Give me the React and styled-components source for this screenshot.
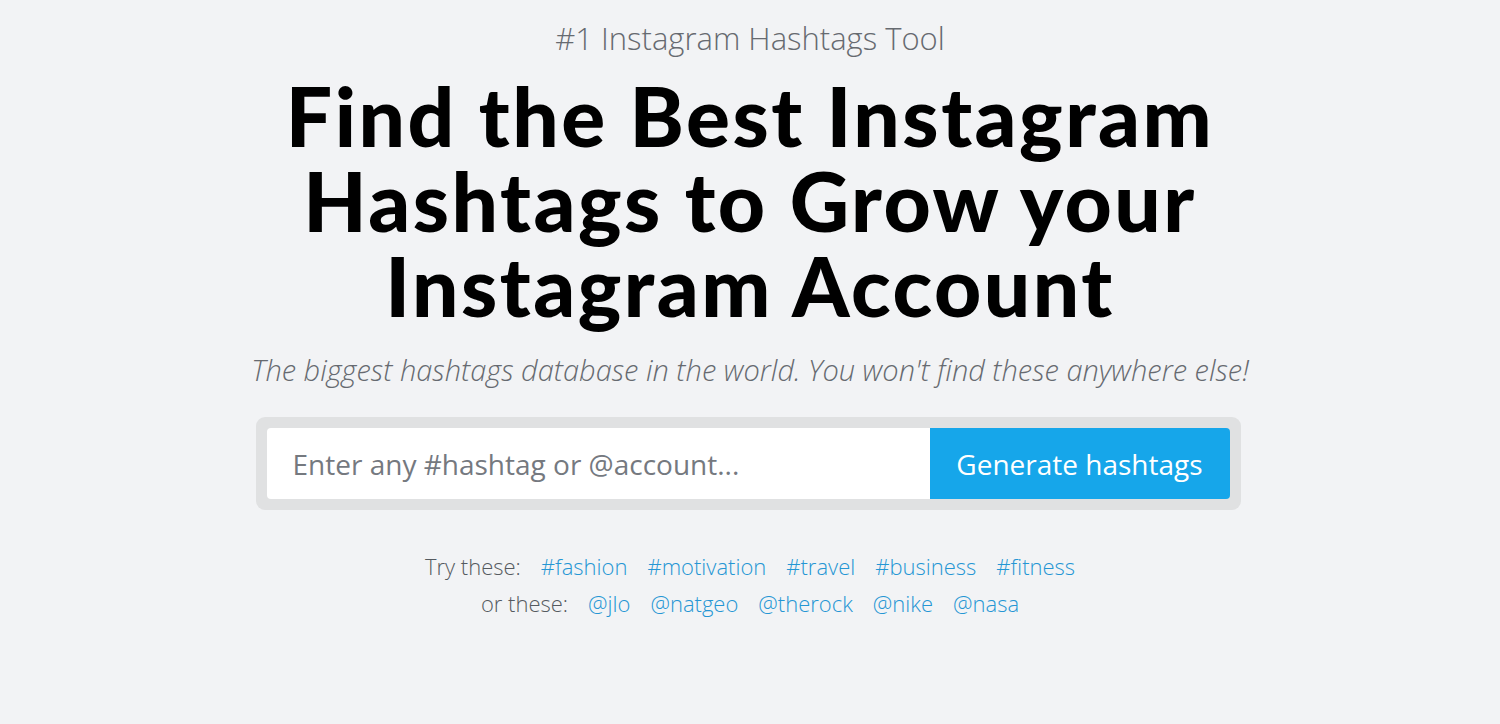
import styled, { createGlobalStyle } from "styled-components";

const Global = createGlobalStyle`
  body {
    margin: 0;
    background: #f2f3f5;
    font-family: "Open Sans", "Noto Sans", sans-serif;
  }
`

const Hero = styled.section`
  display: flex;
  flex-direction: column;
  align-items: center;
  padding-top: 17px;
  text-align: center;
`

const Kicker = styled.p`
  margin: 0;
  font-size: 31px;
  font-weight: 300;
  color: #666a70;
  line-height: 42px;
`

const Title = styled.h1`
  margin: 14px 0 0;
  font-family: "Lato", "Open Sans", sans-serif;
  font-weight: 900;
  font-size: 82px;
  letter-spacing: 2.5px;
  line-height: 85px;
  color: #000;
  max-width: 1000px;
`

const Tagline = styled.p`
  margin: 24px 0 0;
  font-size: 29px;
  font-weight: 300;
  font-style: italic;
  color: #666a70;
  line-height: 36px;
`

const SearchBox = styled.form`
  margin-top: 29px;
  width: 963px;
  display: flex;
  padding: 11px;
  background: #e0e1e2;
  border-radius: 9px;
  transform: translateX(-2px);
`

const Input = styled.input`
  flex: 1;
  height: 71px;
  box-sizing: border-box;
  border: none;
  border-radius: 4px 0 0 4px;
  padding: 0 26px;
  font-family: inherit;
  font-size: 28px;
  color: #333;
  outline: none;
  &::placeholder {
    color: #75797f;
  }
`

const Button = styled.button`
  width: 300px;
  height: 71px;
  border: none;
  border-radius: 0 4px 4px 0;
  background: #16a6ea;
  color: #fff;
  font-family: inherit;
  font-size: 28px;
  cursor: pointer;
`

const Suggestions = styled.div`
  margin-top: 40px;
  display: flex;
  flex-direction: column;
  align-items: center;
  gap: 5px;
`

const Row = styled.div`
  display: flex;
  gap: 20px;
  font-size: 22px;
  font-weight: 300;
  line-height: 32px;
`

const Label = styled.span`
  color: #555a60;
`

const Tag = styled.a`
  color: #2596d4;
  text-decoration: none;
`

const hashtags = ["#fashion", "#motivation", "#travel", "#business", "#fitness"];
const accounts = ["@jlo", "@natgeo", "@therock", "@nike", "@nasa"];

const App = () => {
  return (
    <>
      <Global />
      <Hero>
        <Kicker>#1 Instagram Hashtags Tool</Kicker>
        <Title>Find the Best Instagram Hashtags to Grow your Instagram Account</Title>
        <Tagline>The biggest hashtags database in the world. You won't find these anywhere else!</Tagline>
        <SearchBox onSubmit={e => e.preventDefault()}>
          <Input placeholder="Enter any #hashtag or @account..." />
          <Button type="submit">Generate hashtags</Button>
        </SearchBox>
        <Suggestions>
          <Row>
            <Label>Try these:</Label>
            {hashtags.map(t => <Tag key={t} href="#">{t}</Tag>)}
          </Row>
          <Row>
            <Label>or these:</Label>
            {accounts.map(t => <Tag key={t} href="#">{t}</Tag>)}
          </Row>
        </Suggestions>
      </Hero>
    </>
  );
}

export default App;
